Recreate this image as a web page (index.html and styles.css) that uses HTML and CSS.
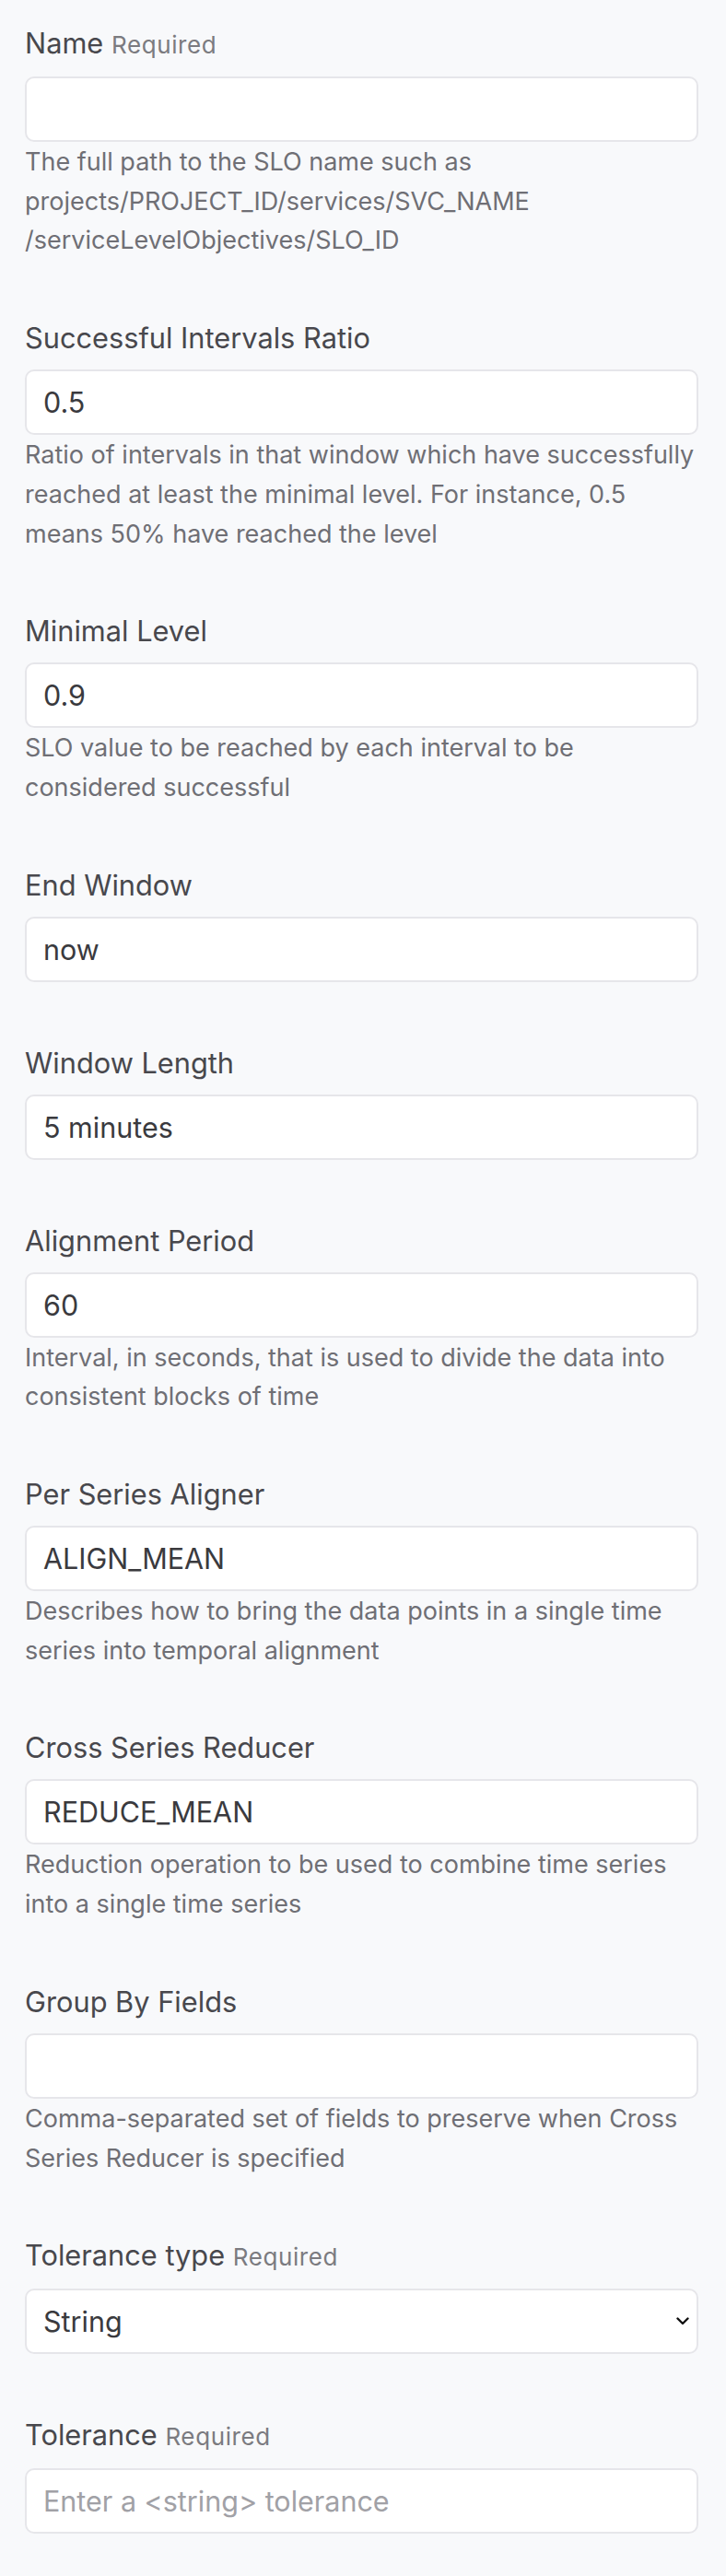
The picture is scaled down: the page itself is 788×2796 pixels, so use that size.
FILE: index.html
```html
<!DOCTYPE html>
<html lang="en">
<head>
<meta charset="utf-8">
<title>SLO form</title>
<link rel="stylesheet" href="styles.css">
</head>
<body>
<main class="form">
  <div class="field">
    <label class="label">Name <span class="req">Required</span></label>
    <input class="input" type="text" value="">
    <p class="help">The full path to the SLO name such as projects/PROJECT_ID/services/SVC_NAME<br>/serviceLevelObjectives/SLO_ID</p>
  </div>
  <div class="field">
    <label class="label">Successful Intervals Ratio</label>
    <input class="input" type="text" value="0.5">
    <p class="help">Ratio of intervals in that window which have successfully reached at least the minimal level. For instance, 0.5 means 50% have reached the level</p>
  </div>
  <div class="field">
    <label class="label">Minimal Level</label>
    <input class="input" type="text" value="0.9">
    <p class="help">SLO value to be reached by each interval to be considered successful</p>
  </div>
  <div class="field">
    <label class="label">End Window</label>
    <input class="input" type="text" value="now">
  </div>
  <div class="field">
    <label class="label">Window Length</label>
    <input class="input" type="text" value="5 minutes">
  </div>
  <div class="field">
    <label class="label">Alignment Period</label>
    <input class="input" type="text" value="60">
    <p class="help">Interval, in seconds, that is used to divide the data into consistent blocks of time</p>
  </div>
  <div class="field">
    <label class="label">Per Series Aligner</label>
    <input class="input" type="text" value="ALIGN_MEAN">
    <p class="help">Describes how to bring the data points in a single time series into temporal alignment</p>
  </div>
  <div class="field">
    <label class="label">Cross Series Reducer</label>
    <input class="input" type="text" value="REDUCE_MEAN">
    <p class="help">Reduction operation to be used to combine time series into a single time series</p>
  </div>
  <div class="field">
    <label class="label">Group By Fields</label>
    <input class="input" type="text" value="">
    <p class="help">Comma-separated set of fields to preserve when Cross Series Reducer is specified</p>
  </div>
  <div class="field">
    <label class="label">Tolerance type <span class="req">Required</span></label>
    <div class="input select">
      <span>String</span>
      <svg class="chev" width="14" height="9" viewBox="0 0 14 9"><path d="M1.5 1.5 L7 7 L12.5 1.5" fill="none" stroke="#111" stroke-width="2.4" stroke-linecap="round" stroke-linejoin="round"/></svg>
    </div>
  </div>
  <div class="field">
    <label class="label">Tolerance <span class="req">Required</span></label>
    <input class="input" type="text" placeholder="Enter a &lt;string&gt; tolerance">
  </div>
</main>
</body>
</html>
```
FILE: styles.css
```css
html, body {
  margin: 0;
  background: #f8f9fb;
}

body {
  font-family: Inter, "Noto Sans", sans-serif;
}

.form {
  padding: 24px 30px 0 27px;
}

.field {
  padding-bottom: 61px;
}

.label {
  display: block;
  font-size: 30.75px;
  line-height: 45px;
  color: #48484d;
  margin-bottom: 12px;
}

.req {
  font-size: 26px;
  letter-spacing: 0.6px;
  color: #7b7b80;
}

.input {
  display: block;
  width: 100%;
  height: 71px;
  box-sizing: border-box;
  margin: 0;
  border: 2px solid #e6e6ea;
  border-radius: 10px;
  background: #ffffff;
  padding: 0 18px;
  font-family: Inter, "Noto Sans", sans-serif;
  font-size: 30.5px;
  color: #3a3a3e;
  outline: none;
}

.input::placeholder {
  color: #a1a1a6;
}

.field > .input:last-child {
  margin-bottom: 4px;
}

.select {
  display: flex;
  align-items: center;
  justify-content: space-between;
  padding-right: 8px;
}

.chev {
  display: block;
}

.help {
  margin: 1px 0 0;
  font-size: 27px;
  line-height: 42.7px;
  color: #6f6f75;
}
```
